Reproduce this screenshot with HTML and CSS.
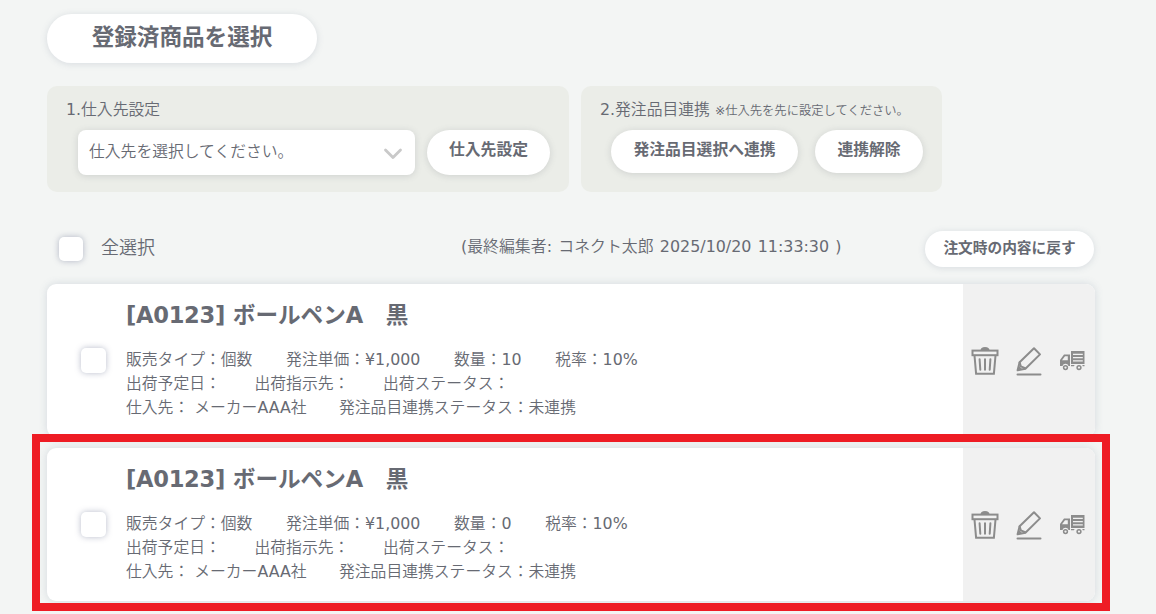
FILE: index.html
```html
<!DOCTYPE html>
<html lang="ja">
<head>
    <meta charset="UTF-8">
    <meta name="viewport" content="width=device-width, initial-scale=1.0">
    <title>登録済商品を選択</title>
    <link rel="stylesheet" href="styles.css">
</head>
<body>
    <!-- アイコン定義 -->
    <svg class="icon-defs" width="0" height="0">
        <symbol id="icon-trash" viewBox="0 0 28 30">
            <path d="M9.5 4.5a4.5 3.6 0 0 1 9 0z" fill="#8c8c8c"/>
            <g fill="none" stroke="#8c8c8c" stroke-width="2">
                <rect x="1.5" y="4.6" width="25" height="4.6"/>
                <path d="M3.5 9.5l1.6 18.3h17.8l1.6-18.3"/>
                <path d="M8.6 13.3l.7 10.4M14 13.3v10.4M19.4 13.3l-.7 10.4" stroke-linecap="round"/>
            </g>
        </symbol>
        <symbol id="icon-edit" viewBox="0 0 28 30">
            <g fill="none" stroke="#8c8c8c" stroke-width="2" stroke-linejoin="round" stroke-linecap="round">
                <path d="M4.6 16.2L19 2.2l6 6.2-14.6 14.4-7.8 1.4z"/>
                <path d="M4.6 16.4l1.2 4 4.4 1.8"/>
                <path d="M2.5 28.6h23"/>
            </g>
            <path d="M2.4 24.4l1-5.2 4 4.4z" fill="#8c8c8c"/>
        </symbol>
        <symbol id="icon-truck" viewBox="0 0 25 20">
            <g fill="#8c8c8c">
                <path fill-rule="evenodd" d="M0 9l4-5.5h6V15H8.6a3.3 3.3 0 0 0-6.2 0H0zM2 9.3h5.8V5.2H5z"/>
                <path d="M11 0h13.5v13H11z"/>
                <path d="M11 14h3.6l-.7 1.3H11zM22.3 14h2.2v1.3h-1.8z"/>
            </g>
            <path d="M13 3.3h9.8M13 6.6h9.8M13 9.9h9.8" stroke="#f1f1f1" stroke-width="1.2"/>
            <g fill="none" stroke="#8c8c8c" stroke-width="1.5">
                <circle cx="5.5" cy="16.6" r="1.9"/>
                <circle cx="19" cy="16.6" r="1.9"/>
            </g>
        </symbol>
    </svg>

    <main class="container">
        <button class="btn btn-title">登録済商品を選択</button>

        <!-- 設定エリア -->
        <div class="panels">
            <section class="panel panel-supplier">
                <div class="panel-label">1.仕入先設定</div>
                <div class="panel-body">
                    <div class="select-box">
                        <span>仕入先を選択してください。</span>
                        <svg width="20" height="12" viewBox="0 0 20 12">
                            <path d="M2.5 2l7.5 7.6L17.5 2" fill="none" stroke="#c9c9c9" stroke-width="2.8" stroke-linecap="round" stroke-linejoin="round"/>
                        </svg>
                    </div>
                    <button class="btn btn-supplier">仕入先設定</button>
                </div>
            </section>
            <section class="panel panel-link">
                <div class="panel-label">2.発注品目連携 <small>※仕入先を先に設定してください。</small></div>
                <div class="panel-body">
                    <button class="btn btn-link">発注品目選択へ連携</button>
                    <button class="btn btn-unlink">連携解除</button>
                </div>
            </section>
        </div>

        <!-- 一覧ヘッダー -->
        <div class="list-header">
            <span class="checkbox"></span>
            <span class="select-all">全選択</span>
            <span class="last-editor">(最終編集者: コネクト太郎 2025/10/20 11:33:30 )</span>
            <button class="btn btn-reset">注文時の内容に戻す</button>
        </div>

        <!-- 商品一覧 -->
        <div class="item-list">
            <article class="item">
                <span class="checkbox"></span>
                <div class="item-body">
                    <h2 class="item-name"><span class="code">[A0123]</span> ボールペンA　黒</h2>
                    <div class="item-row"><span>販売タイプ：個数</span><span>発注単価：¥1,000</span><span>数量：10</span><span>税率：10%</span></div>
                    <div class="item-row"><span>出荷予定日：</span><span>出荷指示先：</span><span>出荷ステータス：</span></div>
                    <div class="item-row"><span>仕入先： メーカーAAA社</span><span>発注品目連携ステータス：未連携</span></div>
                </div>
                <div class="item-actions">
                    <svg class="icon-trash"><use href="#icon-trash"/></svg>
                    <svg class="icon-edit"><use href="#icon-edit"/></svg>
                    <svg class="icon-truck"><use href="#icon-truck"/></svg>
                </div>
            </article>
            <article class="item highlighted">
                <span class="checkbox"></span>
                <div class="item-body">
                    <h2 class="item-name"><span class="code">[A0123]</span> ボールペンA　黒</h2>
                    <div class="item-row"><span>販売タイプ：個数</span><span>発注単価：¥1,000</span><span>数量：0</span><span>税率：10%</span></div>
                    <div class="item-row"><span>出荷予定日：</span><span>出荷指示先：</span><span>出荷ステータス：</span></div>
                    <div class="item-row"><span>仕入先： メーカーAAA社</span><span>発注品目連携ステータス：未連携</span></div>
                </div>
                <div class="item-actions">
                    <svg class="icon-trash"><use href="#icon-trash"/></svg>
                    <svg class="icon-edit"><use href="#icon-edit"/></svg>
                    <svg class="icon-truck"><use href="#icon-truck"/></svg>
                </div>
            </article>
        </div>
    </main>
</body>
</html>
```
FILE: styles.css
```css
* {
    margin: 0;
    padding: 0;
    box-sizing: border-box;
}

body {
    height: 614px;
    overflow: hidden;
    background-color: #f3f5f4;
    color: #676a73;
    font-family: "DejaVu Sans", "Noto Sans CJK JP DemiLight", "Noto Sans CJK JP", sans-serif;
    font-size: 15.8px;
    line-height: 24px;
    white-space: nowrap;
}

.icon-defs {
    display: block;
}

.container {
    width: 1048px;
    margin-left: 47px;
    padding-top: 14px;
}

/* ボタン共通 */
.btn {
    display: block;
    border: none;
    border-radius: 25px;
    background-color: #fff;
    color: inherit;
    font-family: "DejaVu Sans", "Noto Sans CJK JP", sans-serif;
    font-size: 15.8px;
    font-weight: bold;
    line-height: 24px;
    text-align: center;
    white-space: nowrap;
    box-shadow: 0 1px 7px rgba(90, 105, 135, 0.18);
}

.btn-title {
    width: 270px;
    height: 49px;
    padding-bottom: 3px;
    font-size: 22.6px;
}

/* 設定エリア */
.panels {
    display: flex;
    gap: 12px;
    margin-top: 23px;
}

.panel {
    height: 106px;
    padding: 11px 19px 0;
    border-radius: 10px;
    background-color: #ebede8;
}

.panel-supplier {
    width: 522px;
}

.panel-link {
    width: 361px;
}

.panel-label {
    height: 33px;
    line-height: 25px;
}

.panel-label small {
    font-size: 12.3px;
}

.panel-body {
    display: flex;
    gap: 12px;
    padding-left: 12px;
}

.panel .btn {
    box-shadow: 0 1px 7px rgba(90, 95, 105, 0.2);
}

.panel-link .panel-body {
    gap: 17px;
    padding-left: 11px;
}

.select-box {
    display: flex;
    align-items: center;
    justify-content: space-between;
    width: 337px;
    height: 45px;
    padding: 0 12px 2px 11px;
    border-radius: 8px;
    background-color: #fff;
    box-shadow: 0 1px 7px rgba(90, 95, 105, 0.2);
}

.select-box svg {
    margin-top: 4px;
}

.btn-supplier {
    width: 123px;
    height: 45px;
    padding-bottom: 6px;
}

.btn-link,
.btn-unlink {
    height: 43px;
    padding-bottom: 4px;
}

.btn-link {
    width: 187px;
}

.btn-unlink {
    width: 108px;
}

/* 一覧ヘッダー */
.list-header {
    display: flex;
    align-items: center;
    height: 36px;
    margin-top: 39px;
    padding-left: 12px;
}

.checkbox {
    flex: none;
    width: 24px;
    height: 24px;
    border-radius: 5px;
    background-color: #fff;
    box-shadow: 0 0 6px rgba(80, 90, 125, 0.4);
}

.select-all {
    width: 360px;
    margin-top: -2px;
    margin-left: 18px;
    font-size: 18px;
}

.last-editor {
    margin-top: -4px;
    font-size: 15.9px;
    word-spacing: 1.2px;
}

.btn-reset {
    width: 169px;
    height: 36px;
    margin-right: 1px;
    margin-left: auto;
    padding-bottom: 3px;
    font-size: 14.7px;
}

/* 商品一覧 */
.item-list {
    display: flex;
    flex-direction: column;
    gap: 11px;
    margin-top: 17px;
}

.item {
    position: relative;
    display: flex;
    align-items: center;
    height: 153px;
    padding-left: 34px;
    border-radius: 9px;
    background-color: #fff;
    box-shadow: 0 0 8px rgba(90, 110, 140, 0.2);
}

.item .checkbox {
    width: 25px;
    height: 25px;
}

.item-body {
    flex: 1;
    height: 100%;
    margin-left: 20px;
    padding-top: 15px;
}

.item-name {
    margin-bottom: 17px;
    font-family: "DejaVu Sans", "Noto Sans CJK JP", sans-serif;
    font-size: 22.6px;
    line-height: 32px;
}

.item-name .code {
    letter-spacing: -0.3px;
}

.item-row {
    display: flex;
    gap: 33.7px;
    height: 23.8px;
}

.item-row:last-child {
    gap: 32.5px;
}

.item-actions {
    display: flex;
    align-items: center;
    width: 132px;
    height: 100%;
    border-radius: 0 9px 9px 0;
    background-color: #f1f1f1;
}

.icon-trash {
    width: 28px;
    height: 30px;
    margin-left: 7.5px;
}

.icon-edit {
    width: 28px;
    height: 30px;
    margin-left: 16px;
}

.icon-truck {
    width: 25px;
    height: 20px;
    margin-left: 17.5px;
}

/* 強調枠 */
.highlighted::after {
    content: "";
    position: absolute;
    top: -14px;
    right: -15px;
    bottom: -10px;
    left: -15px;
    border: 8px solid #ee1c24;
}
```
